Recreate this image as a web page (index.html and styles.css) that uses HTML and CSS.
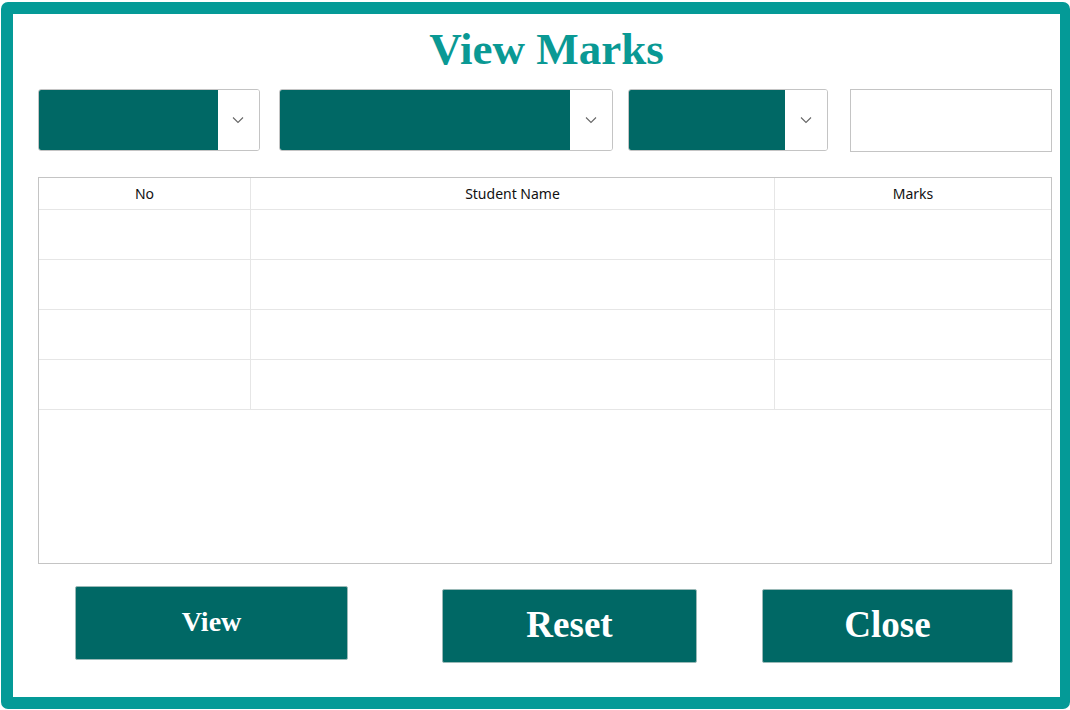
FILE: index.html
```html
<!DOCTYPE html>
<html>
<head>
<meta charset="utf-8">
<title>View Marks</title>
<link rel="stylesheet" href="styles.css">
</head>
<body>
<div class="frame">
  <h1 class="title">View Marks</h1>
  <div class="controls">
    <div class="combo combo-1">
      <div class="combo-fill"></div>
      <div class="combo-btn"><svg width="12" height="8" viewBox="0 0 12 8"><path d="M1 1.5 L6 6.5 L11 1.5" fill="none" stroke="#666" stroke-width="1.1"/></svg></div>
    </div>
    <div class="combo combo-2">
      <div class="combo-fill"></div>
      <div class="combo-btn"><svg width="12" height="8" viewBox="0 0 12 8"><path d="M1 1.5 L6 6.5 L11 1.5" fill="none" stroke="#666" stroke-width="1.1"/></svg></div>
    </div>
    <div class="combo combo-3">
      <div class="combo-fill"></div>
      <div class="combo-btn"><svg width="12" height="8" viewBox="0 0 12 8"><path d="M1 1.5 L6 6.5 L11 1.5" fill="none" stroke="#666" stroke-width="1.1"/></svg></div>
    </div>
    <div class="textbox"></div>
  </div>
  <div class="grid">
    <div class="row head">
      <div class="cell c1">No</div>
      <div class="cell c2">Student Name</div>
      <div class="cell c3">Marks</div>
    </div>
    <div class="row"><div class="cell c1"></div><div class="cell c2"></div><div class="cell c3"></div></div>
    <div class="row"><div class="cell c1"></div><div class="cell c2"></div><div class="cell c3"></div></div>
    <div class="row"><div class="cell c1"></div><div class="cell c2"></div><div class="cell c3"></div></div>
    <div class="row"><div class="cell c1"></div><div class="cell c2"></div><div class="cell c3"></div></div>
  </div>
  <div class="actions">
    <button class="btn btn-view">View</button>
    <button class="btn btn-reset">Reset</button>
    <button class="btn btn-close">Close</button>
  </div>
</div>
</body>
</html>
```

FILE: styles.css
```css
html, body {
  margin: 0;
  padding: 0;
  background: #ffffff;
}

.frame {
  box-sizing: border-box;
  width: 1069px;
  height: 707px;
  margin: 2px 0 0 1px;
  border: 12px solid #049a97;
  border-right-width: 10px;
  border-radius: 7px;
  background: #ffffff;
  display: flex;
  flex-direction: column;
}

.title {
  margin: 13px 0 0 0;
  height: 45px;
  font-family: "Liberation Serif", "Times New Roman", serif;
  font-weight: bold;
  font-size: 45px;
  line-height: 45px;
  color: #0a9994;
  text-align: center;
  padding-left: 20px;
}

.controls {
  display: flex;
  margin: 17px 8px 0 25px;
  height: 62px;
}

.combo {
  box-sizing: border-box;
  display: flex;
  height: 62px;
  border: 1px solid #c4c4c4;
  border-radius: 3px;
  overflow: hidden;
  background: #fff;
}

.combo-fill {
  flex: 1;
  background: #006865;
}

.combo-btn {
  display: flex;
  align-items: center;
  justify-content: center;
  background: #fff;
}

.combo-1 { width: 222px; }
.combo-1 .combo-btn { width: 41px; }
.combo-2 { width: 335px; margin-left: 19px; }
.combo-2 .combo-btn { width: 42px; }
.combo-3 { width: 200px; margin-left: 15px; }
.combo-3 .combo-btn { width: 42px; }

.textbox {
  box-sizing: border-box;
  width: 202px;
  height: 63px;
  margin-left: 22px;
  border: 1px solid #c4c4c4;
  background: #fff;
}

.grid {
  box-sizing: border-box;
  margin: 26px 8px 0 25px;
  height: 387px;
  border: 1px solid #c4c4c4;
  display: flex;
  flex-direction: column;
  font-family: "Noto Sans", "Open Sans", sans-serif;
  font-size: 14px;
  color: #111;
}

.row {
  display: flex;
  height: 50px;
  border-bottom: 1px solid #e6e6e6;
  box-sizing: border-box;
}

.row.head {
  height: 32px;
}

.cell {
  box-sizing: border-box;
  display: flex;
  align-items: center;
  justify-content: center;
  border-right: 1px solid #e6e6e6;
}

.c1 { width: 212px; }
.c2 { width: 524px; }
.c3 { flex: 1; border-right: none; }

.actions {
  display: flex;
  align-items: flex-start;
  margin: 22px 0 0 62px;
}

.btn {
  box-sizing: border-box;
  background: #006865;
  color: #ffffff;
  border: 1px solid #9ab9b7;
  border-radius: 2px;
  font-family: "Liberation Serif", "Times New Roman", serif;
  font-weight: bold;
  padding: 0;
  height: 74px;
  cursor: pointer;
}

.btn-view {
  width: 273px;
  font-size: 28px;
  padding-bottom: 2px;
}

.btn-reset {
  width: 255px;
  margin-left: 94px;
  margin-top: 3px;
  font-size: 37px;
  padding-bottom: 4px;
}

.btn-close {
  width: 251px;
  margin-left: 65px;
  margin-top: 3px;
  font-size: 37px;
  padding-bottom: 4px;
}
```
